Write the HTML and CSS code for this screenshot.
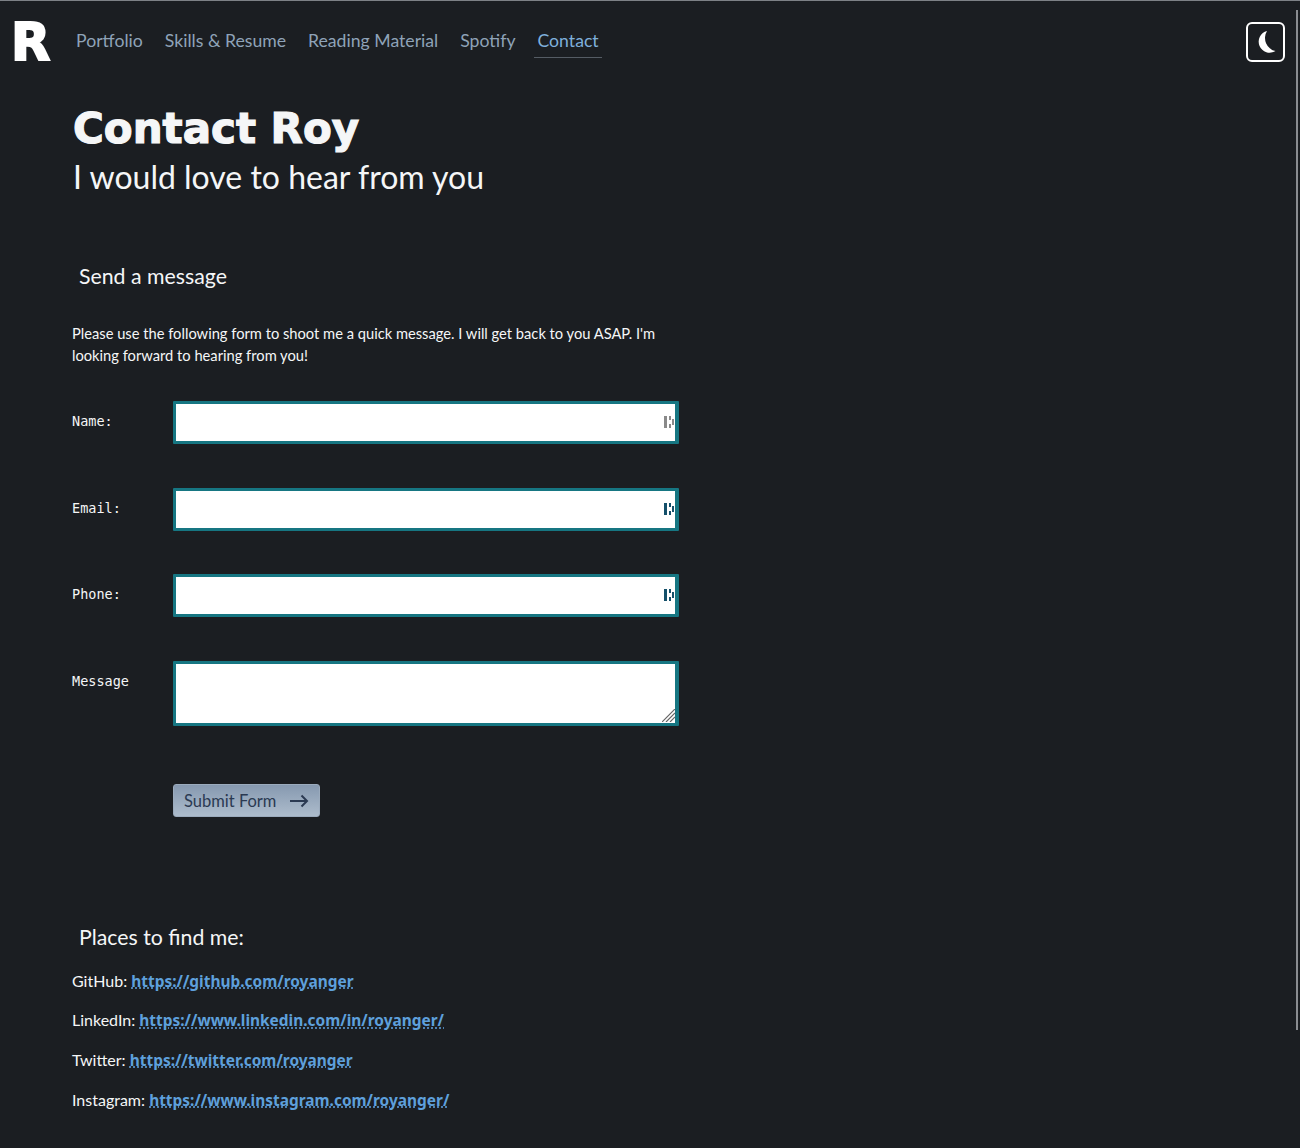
FILE: index.html
```html
<!DOCTYPE html>
<html lang="en">
<head>
<meta charset="utf-8">
<title>Contact Roy</title>
<link rel="stylesheet" href="styles.css">
</head>
<body>
<div class="scrollbar"></div>
<header class="topbar">
  <a class="logo" href="#">R</a>
  <nav class="nav">
    <a href="#">Portfolio</a>
    <a href="#">Skills &amp; Resume</a>
    <a href="#">Reading Material</a>
    <a href="#">Spotify</a>
    <a class="active" href="#">Contact</a>
  </nav>
  <button class="theme" type="button" aria-label="Toggle theme">
    <svg width="22" height="24" viewBox="0 0 22 24"><path d="M12 1A11 11 0 1 0 20.500 21 13.300 13.300 0 0 1 12 1Z" fill="#fff"/></svg>
  </button>
</header>
<main class="main">
  <h1 class="title">Contact Roy</h1>
  <p class="subtitle">I would love to hear from you</p>
  <h2 class="section first">Send a message</h2>
  <p class="intro">Please use the following form to shoot me a quick message. I will get back to you ASAP. I'm looking forward to hearing from you!</p>
  <form class="form">
    <label class="label">Name:</label>
    <div class="field"><input type="text"><svg class="pm dim" width="10" height="14" viewBox="0 0 10 14"><path d="M0 1h3v12H0zM5 1h2v4H5zM5 9h2v4H5zM8 4h2v6H8z" fill="currentColor"/></svg></div>
    <label class="label">Email:</label>
    <div class="field"><input type="text"><svg class="pm" width="10" height="14" viewBox="0 0 10 14"><path d="M0 1h3v12H0zM5 1h2v4H5zM5 9h2v4H5zM8 4h2v6H8z" fill="currentColor"/></svg></div>
    <label class="label">Phone:</label>
    <div class="field"><input type="text"><svg class="pm" width="10" height="14" viewBox="0 0 10 14"><path d="M0 1h3v12H0zM5 1h2v4H5zM5 9h2v4H5zM8 4h2v6H8z" fill="currentColor"/></svg></div>
    <label class="label">Message</label>
    <div class="field"><textarea></textarea><svg class="grip" width="13" height="13" viewBox="0 0 13 13"><path d="M0 13 13 0M4 13 13 4M8 13 13 8" fill="none" stroke="#666" stroke-width="1.200"/></svg></div>
    <div class="actions">
      <button class="submit" type="button"><span class="submit-text">Submit Form</span>
        <svg width="20" height="14" viewBox="0 0 20 14"><path d="M1 7h17M12.500 1.500 18 7l-5.500 5.500" fill="none" stroke="#2b3a52" stroke-width="2"/></svg>
      </button>
    </div>
  </form>
  <h2 class="section places">Places to find me:</h2>
  <ul class="links">
    <li>GitHub: <a href="#">https://github.com/royanger</a></li>
    <li>LinkedIn: <a href="#">https://www.linkedin.com/in/royanger/</a></li>
    <li>Twitter: <a href="#">https://twitter.com/royanger</a></li>
    <li>Instagram: <a href="#">https://www.instagram.com/royanger/</a></li>
  </ul>
</main>
</body>
</html>
```
FILE: styles.css
```css
* { box-sizing: border-box; }
html, body { height: 100%; }
body {
  margin: 0;
  background: #1b1e22;
  color: #f5f6f7;
  font-family: "Lato", sans-serif;
  border-top: 1px solid #7d8186;
  overflow: hidden;
  position: relative;
}
.scrollbar {
  position: absolute;
  top: 9px;
  right: 2px;
  width: 2px;
  height: 1020px;
  background: #8a8d91;
}
.topbar {
  display: flex;
  align-items: center;
  height: 82px;
  padding: 0 15px 0 11px;
}
.logo {
  font-family: "DejaVu Sans", sans-serif;
  font-weight: 700;
  font-size: 51px;
  line-height: 1;
  color: #fff;
  text-decoration: none;
  width: 62px;
  -webkit-text-stroke: 2px #fff;
}
.nav { display: flex; gap: 16px; }
.nav a {
  font-size: 17.650px;
  line-height: 24px;
  padding: 3px 3px 4px;
  color: #8fa3b8;
  text-decoration: none;
  border-bottom: 1px solid transparent;
}
.nav a.active { color: #7fb0dc; border-bottom-color: #555c64; }
.theme {
  margin-left: auto;
  width: 39px;
  height: 40px;
  border: 2px solid #fff;
  border-radius: 6px;
  background: transparent;
  padding: 0;
  display: flex;
  align-items: center;
  justify-content: center;
}
.main { padding: 0 0 0 72px; width: 680px; }
.title {
  margin: 19px 0 0 1px;
  font-family: "DejaVu Sans", sans-serif;
  font-weight: 700;
  font-size: 42px;
  line-height: 53px;
  -webkit-text-stroke: 1.200px #f5f6f7;
}
.subtitle {
  margin: 0 0 0 1px;
  font-size: 32px;
  line-height: 44px;
  font-weight: 400;
}
.section { margin: 0 0 0 7px; font-size: 21.300px; line-height: 30px; font-weight: 400; }
.section.first { margin-top: 62px; }
.intro { margin: 31px 0 0; font-size: 14.700px; line-height: 22px; }
.form {
  margin-top: 35px;
  display: grid;
  grid-template-columns: 101px 506px;
  row-gap: 43.500px;
}
.label {
  font-family: "DejaVu Sans Mono", monospace;
  font-size: 13.500px;
  line-height: 20px;
  padding-top: 10px;
}
.field { position: relative; display: flex; }
.field input, .field textarea {
  width: 100%;
  border: 3px solid #167682;
  border-right-width: 4px;
  background: #fff;
  border-radius: 1px;
  padding: 4px;
  display: block;
  outline: none;
}
.field input { height: 43px; }
.field textarea { height: 65px; resize: none; }
.pm { position: absolute; right: 5px; top: 14px; color: #14506a; }
.pm.dim { color: #8a8a8a; }
.grip { position: absolute; right: 4px; bottom: 4px; }
.actions { grid-column: 2; margin-top: 14.500px; }
.submit {
  display: flex;
  align-items: center;
  gap: 13px;
  height: 33px;
  padding: 1px 10px 0;
  border: 1px solid #9babbd;
  border-radius: 3px;
  background: linear-gradient(#8699b0, #adbccc);
  color: #2b3a52;
  font-family: "Lato", sans-serif;
  font-size: 16.500px;
}
.places { margin-top: 105px; }
.links { list-style: none; margin: 17px 0 0; padding: 0; display: flex; flex-direction: column; gap: 15.800px; font-size: 16px; line-height: 24px; }
.links a { font-family: "Noto Sans", sans-serif; font-size: 15.450px; color: #5ea0dc; font-weight: 700; text-decoration: underline dotted; }
```
